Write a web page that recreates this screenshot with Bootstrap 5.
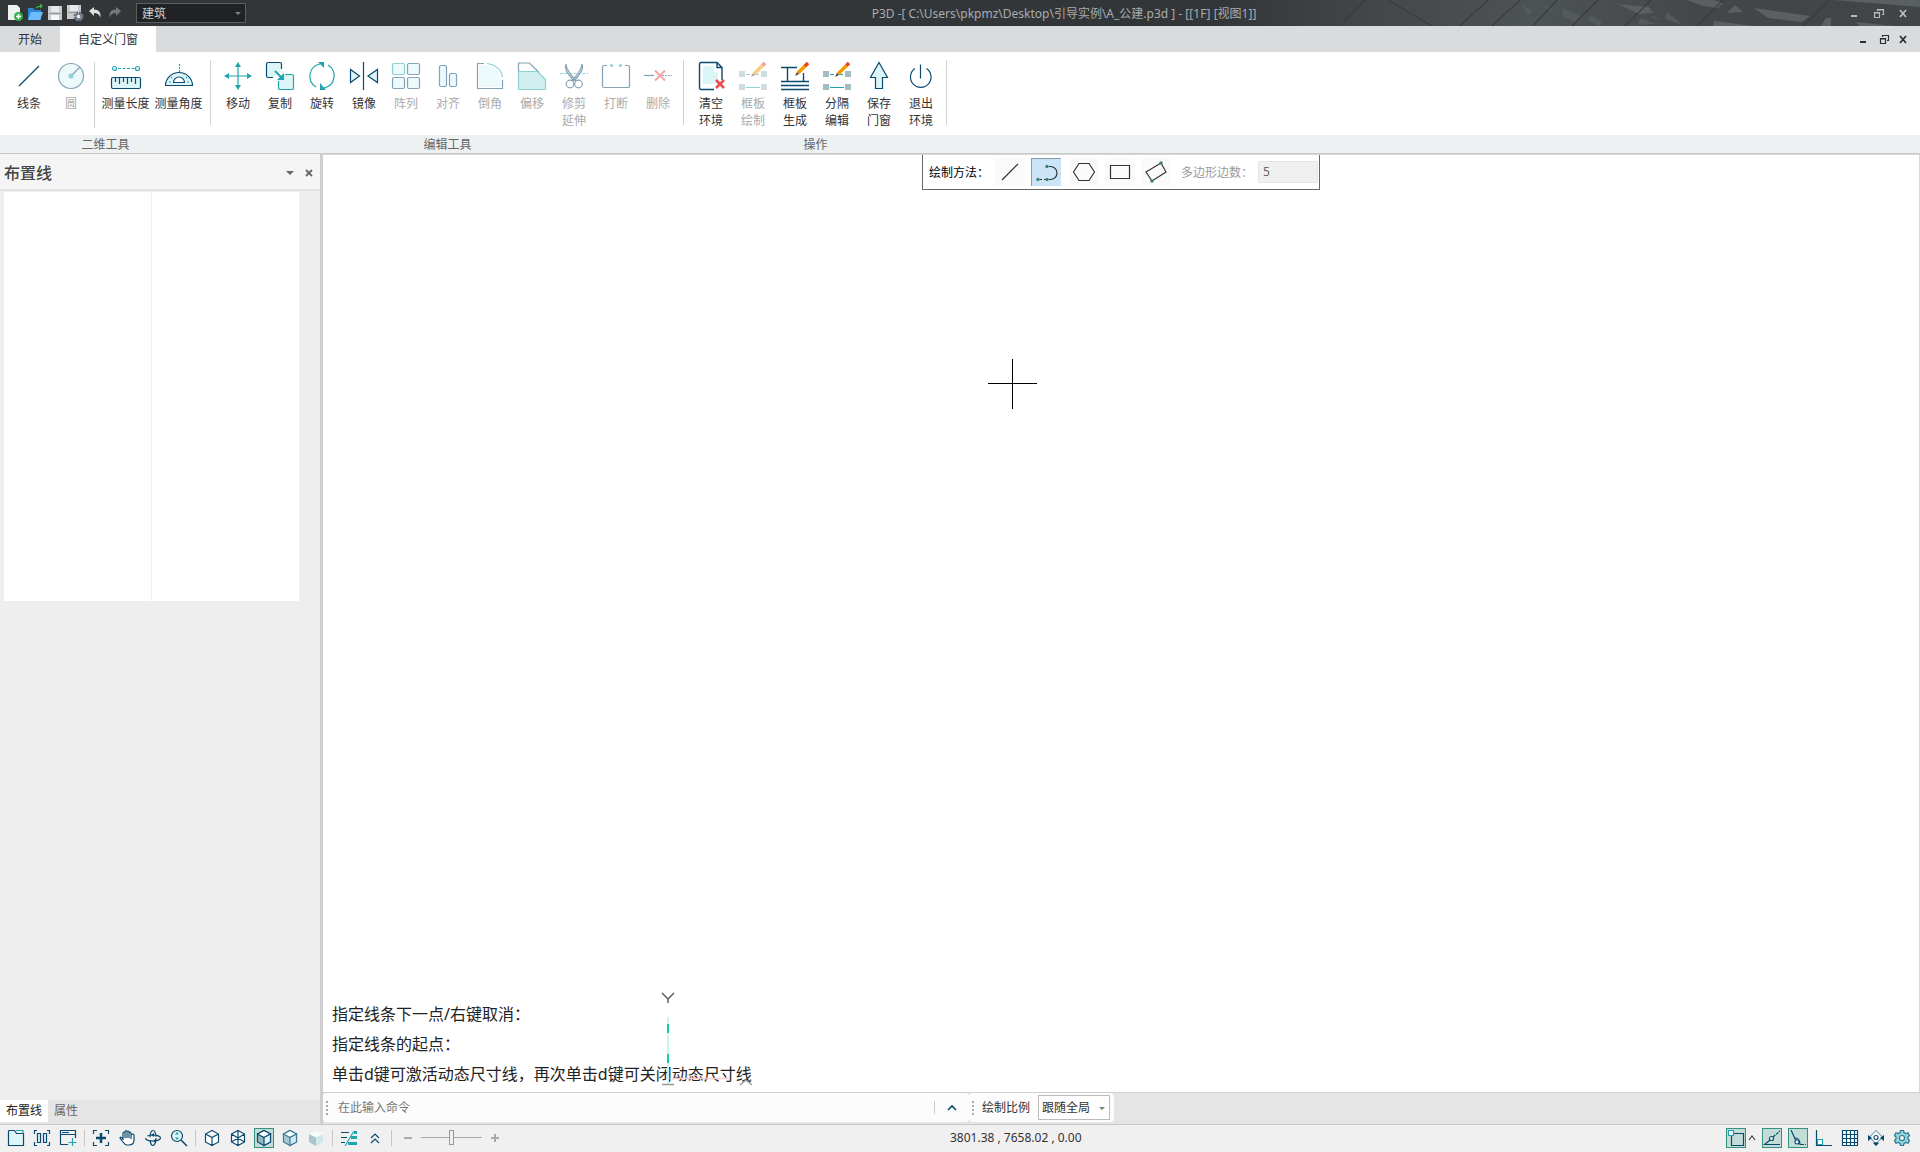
<!DOCTYPE html>
<html lang="zh-CN">
<head>
<meta charset="utf-8">
<meta name="viewport" content="width=device-width, initial-scale=1">
<title>P3D</title>
<link href="https://cdn.jsdelivr.net/npm/bootstrap@5.3.0/dist/css/bootstrap.min.css" rel="stylesheet">
<style>
:root{--navy:#0b4a6f;--teal:#1fa6ad;--pale:#dcf6f8}
body{font:12px/17px "Noto Sans","Noto Sans CJK SC",sans-serif;color:#333;background:#fff;overflow-x:hidden}
button,input,select{font:inherit;color:inherit}
svg{display:block;flex:none;fill:none;stroke:var(--navy);stroke-width:1.2}
.tool{border:0;background:none;padding:0}
.titlebar{height:26px;background:#323639;color:#a9abac}
.titlebar .art{position:absolute;right:0;top:0;z-index:0;stroke:none}
.titlebar>:not(.art){position:relative;z-index:1}
.qat{padding:0 3px 0 5px}
.qat .tool{width:20px;display:flex;justify-content:center}
.pick{appearance:none;border:1px solid #5c5e60;background:#212224;color:#ccc;width:110px;height:20px;padding:0 5px;line-height:17px;border-radius:0}
.pickwrap{position:relative;display:flex}
.pickwrap::after{content:"";position:absolute;right:5px;top:50%;margin-top:-1px;border:3px solid transparent;border-top-color:#808080;border-bottom:0;pointer-events:none}
.caption{padding-left:42px}
.winctl{width:80px;gap:10px;padding-left:4px}
.winctl .tool{width:16px}
.winctl svg{stroke:#b9bbbc}
.tabrow{height:26px;background:#dadbdd}
.tabrow a{color:#333;text-decoration:none;height:26px;line-height:28px;text-align:center;width:60px}
.tabrow a.on{background:#fff;width:96px}
.mdictl{gap:4px;padding-right:9px}
.mdictl .tool{width:16px}
.mdictl svg{stroke:#2c2f31}
.grp{display:flex;flex-direction:column}
.grp .tools{height:83px;padding:8px 5px 8px 6px;display:flex;position:relative}
.grp .tools::after{content:"";position:absolute;right:0;top:8px;height:65px;width:1px;background:#d2d2d2}
.grp .first{padding-left:8px;padding-right:6px}
.grp .tools i{width:1px;height:66px;margin:2px 4px 0 2px;background:#cfcfcf}
.grp h2{font-size:12px;line-height:20px;height:18px;margin:0;text-align:center;color:#666;font-weight:400}
.ribbon{background:linear-gradient(#fff 83px,#edf1f2 83px);border-bottom:1px solid #c8c8c8}
.cmd{width:42px;display:flex;flex-direction:column;align-items:center}
.cmd.wide{width:53px}
.cmd svg{width:32px;height:32px;margin-bottom:3px}
.cmd:disabled{color:#aaa}
.cmd:disabled svg{opacity:.5}
.side{width:323px;background:#eee;border-right:3px solid #cfcfcf}
.side header{height:37px;background:#f5f5f5;border-bottom:2px solid #e4e4e4;padding:2px 4px 0}
.side h1{font-size:16px;line-height:24px;margin:0;color:#444}
.side table{width:295px;height:409px;margin:1px 0 0 4px;background:#fff;table-layout:fixed}
.side td+td{border-left:1px solid #eee}
.dock{height:24px;background:#e5e5e5}
.dock a{color:#666;text-decoration:none;padding:0 6px;height:22px;line-height:22px}
.dock a.on{background:#fff;color:#222}
.canvas{background:#fff;border:1px solid #d8d8d8;border-width:1px 1px 0 0}
.method{border:1px solid #666;border-top:0;height:35px;width:398px;padding:0 1px 0 6px;color:#000}
.method .tool{width:30px;height:28px;background:#fafafa;margin-right:6px;display:flex;align-items:center;justify-content:center}
.method .tool.on{background:#cce4f7;border:1px solid #8e9aa3;border-width:1px 0 0 1px;margin-right:8px}
.method .pre{width:66px}
.method svg{stroke:#333}
.sidelabel{color:#999}
.sides{width:60px;height:22px;border:1px solid #e3e3e3;background:#f0f0f0;padding:0 4px 2px;color:#666;border-radius:2px}
.log{font-size:16px;line-height:30px;padding:0 0 3px 9px;color:#222}
.log p{margin:0}
.cross{position:absolute;left:665px;top:204px;stroke:#000;stroke-width:1}
.ucs{position:absolute;left:332px;bottom:1px;stroke-width:1.4}
.cmdbar{height:32px;border-top:1px solid #d0d0d0;background:#e5e5e5;padding-bottom:2px}
.pane{background:#fcfcfc;border-radius:4px;padding-left:3px}
.grip{width:2px;height:14px;background:repeating-linear-gradient(#aaa 0 2px,transparent 2px 4px)}
.cmdin{border:0;background:none;width:606px;padding:0 0 0 10px;outline:0}
.cmdin::placeholder{color:#777;opacity:1}
.expand{width:34px;display:flex;justify-content:center}
.scale .pick{background:#fff;border-color:#bbb;color:#333;width:72px;height:25px;padding:0 3px;line-height:22px}
.status{height:28px;background:#f0f0f0;border-top:1px solid #c8c8c8;padding:0 5px 2px 3px}
.status .tool{width:26px;height:25px;display:flex;align-items:center;justify-content:center}
.status .tool.on{width:20px;height:20px;margin:0 3px;background:#c2ddd7;border:1px solid #35917d}
.status i{width:1px;height:16px;margin:0 3px;background:#c6c6c6}
.zoom{appearance:none;width:61px;height:16px;margin:0 3px;background:linear-gradient(#a9a9a9,#a9a9a9) center/100% 1px no-repeat}
.zoom::-webkit-slider-thumb{appearance:none;width:5px;height:15px;background:#f0f0f0;border:1px solid #999}
.status .sm{width:20px}
.zoomset{margin-left:3px}
.status .narrow{width:13px}
.coords{left:950px}
.shaded{stroke:#41799a}
</style>
<script src="https://cdn.jsdelivr.net/npm/bootstrap@5.3.0/dist/js/bootstrap.bundle.min.js"></script>
</head>
<body class="d-flex flex-column min-vh-100">

<div class="titlebar d-flex align-items-center position-relative">
  <svg class="art" width="700" height="26" viewBox="0 0 700 26" aria-hidden="true">
    <defs><linearGradient id="sky"><stop offset="0" stop-color="#323639"/><stop offset=".25" stop-color="#45494c"/><stop offset=".45" stop-color="#4d5255"/><stop offset=".7" stop-color="#43474a"/><stop offset="1" stop-color="#404447"/></linearGradient></defs>
    <rect width="700" height="26" fill="url(#sky)"/>
    <path fill="#5a5f62" d="M467 0h27l9 3-5 5-15-2zM534 8l56 8-8 6-34-4zM507 13l8-8 8 7zM613 0h87v7zM494 21l39 5h-40zM601 26l5-8h5v8zM635 22l40 4h-35zM397 4l32 3 4 6-14 1z"/>
    <path fill="#54595c" d="M370 15l12 6-3 5-10-5zM447 12l16 13-18-6zM316 1l18 8-3 3zM430 15l12 5-10-2zM343 8l18 8-5 6-14-6zM300 4l13 6-5 6zM420 18l16 6-18 1z"/>
    <path stroke="#383c3f" stroke-width="1.200" d="M145 0l-21 22M168 0l44 26M268 0l-28 26M300 0l-28 26M337 0l-24 26M378 0l-26 26M431 0l-26 26M503 0l-26 26M610 0l-27 26"/>
  </svg>
  <div class="qat d-flex align-items-center">
    <button class="tool" aria-label="新建"><svg width="18" height="18" viewBox="0 0 18 18"><path d="M2 1h9l3 3v12H2z" fill="#eef0f1" stroke="none"/><circle cx="12.500" cy="12.500" r="4.500" fill="#35b04b" stroke="none"/><path d="M12.500 10v5M10 12.500h5" stroke="#fff" stroke-width="1.500"/></svg></button>
    <button class="tool" aria-label="打开"><svg width="18" height="18" viewBox="0 0 18 18"><path d="M2 4h5l2 2h6v10H2z" fill="#2f86d6" stroke="none"/><path d="M5 8h12l-3 8H2z" fill="#6cbcff" stroke="none"/><path d="M10 4c2-2 3-2 6-2M14 0l2 2-2 2" stroke="#43b94d"/></svg></button>
    <button class="tool" aria-label="保存"><svg width="18" height="18" viewBox="0 0 18 18"><path d="M2 2h14v14H2z" fill="#c9cbcd" stroke="none"/><path d="M5 2h8v6H5z" fill="#e6e9f0" stroke="none"/><path d="M5 11h8v5H5z" fill="#f7f7f7" stroke="none"/><path d="M3 9.500h12" stroke="#999"/></svg></button>
    <button class="tool" aria-label="另存为"><svg width="18" height="18" viewBox="0 0 18 18"><path d="M1 1h14v14H1z" fill="#c9cbcd" stroke="none"/><path d="M4 1h8v6H4z" fill="#e6e9f0" stroke="none"/><path d="M2 8.500h10" stroke="#999"/><circle cx="12.500" cy="12.500" r="3.800" stroke="#64727f" stroke-width="2.500" stroke-dasharray="2 1" fill="#dfe6ec"/><circle cx="12.500" cy="12.500" r="2.600" stroke="#64727f"/></svg></button>
    <button class="tool" aria-label="撤销"><svg width="14" height="14" viewBox="0 0 14 14"><path d="M1 5l5-4v2.500c5 0 7 3 6.500 8C11 8 9 7 6 7v3z" fill="#dedfe0" stroke="none"/></svg></button>
    <button class="tool" aria-label="重做" disabled><svg width="14" height="14" viewBox="0 0 14 14"><path d="M13 5L8 1v2.500c-5 0-7 3-6.500 8C3 8 5 7 8 7v3z" fill="#75797c" stroke="none"/></svg></button>
  </div>
  <div class="pickwrap ms-2"><select class="pick" aria-label="专业"><option>建筑</option></select></div>
  <div class="caption flex-fill text-center text-truncate">P3D -[ C:\Users\pkpmz\Desktop\引导实例\A_公建.p3d ] - [[1F] [视图1]]</div>
  <div class="winctl d-flex align-items-center">
    <button class="tool" aria-label="最小化"><svg width="16" height="16"><path d="M7 11h6" stroke-width="2"/></svg></button>
    <button class="tool" aria-label="还原"><svg width="16" height="16"><path d="M7.500 6V4.500h6v5H12M4.500 7.500h5v5h-5zM7 5h7M4 8h6"/></svg></button>
    <button class="tool" aria-label="关闭"><svg width="16" height="16"><path d="M4 5l6 7M10 5l-6 7" stroke-width="1.800"/></svg></button>
  </div>
</div>

<nav class="tabrow d-flex align-items-center">
  <a href="#">开始</a><a href="#" class="on">自定义门窗</a>
  <div class="mdictl d-flex ms-auto">
    <button class="tool" aria-label="最小化视图"><svg width="16" height="16"><path d="M5 11h6" stroke-width="2"/></svg></button>
    <button class="tool" aria-label="还原视图"><svg width="16" height="16"><path d="M7.500 6V4.500h6v5H12M5.500 7.500h5v5h-5zM7 4.500h7M5 8h6"/></svg></button>
    <button class="tool" aria-label="关闭视图"><svg width="16" height="16"><path d="M5 5l6 7M11 5l-6 7" stroke-width="1.800"/></svg></button>
  </div>
</nav>

<div class="ribbon d-flex">
  <section class="grp"><div class="tools first">
    <button class="cmd tool"><svg viewBox="0 0 32 32"><path d="M6 26L26 6"/></svg>线条</button>
    <button class="cmd tool" disabled><svg viewBox="0 0 32 32"><circle cx="16" cy="16" r="12.500" fill="#dcf6f8"/><path d="M16 16l9-9"/><circle cx="16" cy="16" r="2" fill="#1fa6ad" stroke="#1fa6ad"/></svg>圆</button>
    <i></i>
    <button class="cmd wide tool"><svg viewBox="0 0 32 32"><g stroke="#1fa6ad"><circle cx="4.500" cy="8.500" r="2"/><circle cx="27.500" cy="8.500" r="2"/><path d="M8 8.500h17" stroke-dasharray="3 1.500"/></g><rect x="1.500" y="17.500" width="29" height="11" rx="1.500" fill="#dcf6f8"/><path d="M5.500 18v4M9.500 18v6M13.500 18v4M17.500 18v6M21.500 18v4M25.500 18v6"/></svg>测量长度</button>
    <button class="cmd wide tool"><svg viewBox="0 0 32 32"><path d="M16.500 4v9" stroke="#1fa6ad" stroke-dasharray="2 1"/><path d="M2.500 25.500a13.500 13 0 0 1 27 0z" fill="#dcf6f8"/><path d="M10.500 22.500a5.500 5.500 0 0 1 11 0z" fill="#fff"/><path d="M6 22h2M24 22h2M8 17l1 1M24 17l-1 1" stroke="#1fa6ad"/></svg>测量角度</button>
  </div><h2>二维工具</h2></section>

  <section class="grp"><div class="tools">
    <button class="cmd tool"><svg viewBox="0 0 32 32"><path d="M16 5v22M5 16h22" stroke="#1fa6ad"/><path d="M16 2l3 5h-6zM16 30l3-5h-6zM2 16l5-3v6zM30 16l-5-3v6z" fill="#1fa6ad" stroke="none"/></svg>移动</button>
    <button class="cmd tool"><svg viewBox="0 0 32 32"><path d="M10 17.500H4a1.500 1.500 0 0 1-1.500-1.500V4A1.500 1.500 0 0 1 4 2.500h12A1.500 1.500 0 0 1 17.500 4v6L10 17z" fill="#dcf6f8" stroke="none"/><path d="M9 17.500H4a1.500 1.500 0 0 1-1.500-1.500V4A1.500 1.500 0 0 1 4 2.500h12A1.500 1.500 0 0 1 17.500 4v5"/><path d="M21 14.500h7a1.500 1.500 0 0 1 1.500 1.500v12a1.500 1.500 0 0 1-1.500 1.500H16a1.500 1.500 0 0 1-1.500-1.500v-7" fill="#dcf6f8" stroke="#1fa6ad"/><path d="M11 11l6 6" stroke="#1fa6ad" stroke-width="2"/><path d="M20 20v-7l-7 7z" fill="#1fa6ad" stroke="none"/></svg>复制</button>
    <button class="cmd tool"><svg viewBox="0 0 32 32"><path d="M10 27A12.500 12.500 0 0 1 14 4M22 5a12.500 12.500 0 0 1-4 23" stroke="#1fa6ad"/><path d="M12 2h6v6zM14 30v-7l6 7z" fill="#1fa6ad" stroke="none"/></svg>旋转</button>
    <button class="cmd tool"><svg viewBox="0 0 32 32"><path d="M15.500 2v28"/><path d="M2.500 9.500v13l9-6.500zM29.500 9.500v13L20 16z" fill="#dcf6f8"/></svg>镜像</button>
    <button class="cmd tool" disabled><svg viewBox="0 0 32 32"><g fill="#dcf6f8"><rect x="2.500" y="3.500" width="12" height="11" rx="1.500" stroke="#1fa6ad"/><rect x="17.500" y="3.500" width="12" height="11" rx="1.500"/><rect x="2.500" y="17.500" width="12" height="11" rx="1.500"/><rect x="17.500" y="17.500" width="12" height="11" rx="1.500"/></g></svg>阵列</button>
    <button class="cmd tool" disabled><svg viewBox="0 0 32 32"><rect x="7.500" y="5.500" width="7" height="21" rx="1.500" fill="#dcf6f8"/><rect x="17.500" y="13.500" width="7" height="13" rx="1.500" fill="#dcf6f8"/></svg>对齐</button>
    <button class="cmd tool" disabled><svg viewBox="0 0 32 32"><path d="M5 5h6q15 2 16 17v5H5z" fill="#dcf6f8" stroke="none"/><path d="M10 3.500H3.500v25h25V20"/><path d="M13 3.500Q27 6 28.500 17" stroke="#1fa6ad"/></svg>倒角</button>
    <button class="cmd tool" disabled><svg viewBox="0 0 32 32"><path d="M2.500 12v-9h11l9 9z"/><path d="M2.500 11.500h19l8 8v10h-27z" fill="#a4e0de" stroke="#1fa6ad"/></svg>偏移</button>
    <button class="cmd tool" disabled><svg viewBox="0 0 32 32"><path d="M2 13.500h28" stroke="#1fa6ad" stroke-dasharray="3 1.500"/><path d="M8 4c0 6 6 12 10 17l-3-1C10 14 6 9 8 4zM24 4c0 6-6 12-10 17l3-1c5-6 9-11 7-16z" fill="#dcf6f8"/><circle cx="12" cy="24" r="3.800" fill="#fff"/><circle cx="20.500" cy="24" r="3.800" fill="#fff"/></svg>修剪<br>延伸</button>
    <button class="cmd tool" disabled><svg viewBox="0 0 32 32"><path d="M7 5.500H4A1.500 1.500 0 0 0 2.500 7v19a1.500 1.500 0 0 0 1.500 1.500h24a1.500 1.500 0 0 0 1.500-1.500V7a1.500 1.500 0 0 0-1.500-1.500h-3"/><g fill="#1fa6ad" stroke="none"><circle cx="11.500" cy="5.500" r="1.500"/><circle cx="20.500" cy="5.500" r="1.500"/></g></svg>打断</button>
    <button class="cmd tool" disabled><svg viewBox="0 0 32 32"><path d="M2 15.500h10"/><path d="M20 15.500h10" stroke-dasharray="2 1"/><path d="M13 10.500l10 10M23 10.500l-10 10" stroke="#ee5048" stroke-width="2"/></svg>删除</button>
  </div><h2>编辑工具</h2></section>

  <section class="grp"><div class="tools">
    <button class="cmd tool"><svg viewBox="0 0 32 32"><path d="M8 6h11v6h4v12H8z" fill="#dcf6f8" stroke="none"/><path d="M19 29.500H6A1.500 1.500 0 0 1 4.500 28V4A1.500 1.500 0 0 1 6 2.500h16l5 5V20M22 2.500v5h5" stroke-width="1.400"/><path d="M21 20l8 8M29 20l-8 8" stroke="#e94f52" stroke-width="2.500"/></svg>清空<br>环境</button>
    <button class="cmd tool" disabled><svg viewBox="0 0 32 32"><path fill="#a3bcc1" stroke="none" d="M2 11h6v6H2zM24 11h6v6h-6zM2 24h6v6H2zM24 24h6v6h-6z"/><path d="M9 14.500h4M18 14.500h4M9 27.500h14" stroke="#1fa6ad"/><path d="M17 14l9-9" stroke="#f59a00" stroke-width="3.500"/><path d="M25.500 5.500l2.500-2.500" stroke="#e8422c" stroke-width="3.500"/><path d="M14 17l2-4 2 2z" fill="#4b4035" stroke="none"/></svg>框板<br>绘制</button>
    <button class="cmd tool"><svg viewBox="0 0 32 32"><path d="M2 7.500h16M8.500 8v13M24.500 13v8M2 21.500h28M2 25.500h28M2 29.500h28" stroke-width="1.400"/><path d="M19 13l8-8" stroke="#f59a00" stroke-width="3.500"/><path d="M26 6l3-3" stroke="#e8422c" stroke-width="3.500"/><path d="M16 16l2-4 2 2z" fill="#4b4035" stroke="none"/></svg>框板<br>生成</button>
    <button class="cmd tool"><svg viewBox="0 0 32 32"><path fill="#a3bcc1" stroke="none" d="M2 11h6v6H2zM24 11h6v6h-6zM2 24h6v6H2zM24 24h6v6h-6z"/><path d="M9 14.500h4M18 14.500h4M9 27.500h14" stroke="#1fa6ad"/><path d="M17 14l9-9" stroke="#f59a00" stroke-width="3.500"/><path d="M25.500 5.500l2.500-2.500" stroke="#e8422c" stroke-width="3.500"/><path d="M14 17l2-4 2 2z" fill="#4b4035" stroke="none"/></svg>分隔<br>编辑</button>
    <button class="cmd tool"><svg viewBox="0 0 32 32"><path d="M16 2.500l8.500 15h-5v11h-7v-11h-5z" fill="#dcf6f8"/></svg>保存<br>门窗</button>
    <button class="cmd tool"><svg viewBox="0 0 32 32"><path d="M15.500 4.500v14M10 8.500a10.300 10.300 0 1 0 11.500 0"/></svg>退出<br>环境</button>
  </div><h2>操作</h2></section>
</div>

<main class="d-flex flex-fill">
  <aside class="side d-flex flex-column flex-shrink-0">
    <header class="d-flex align-items-center"><h1 class="flex-fill">布置线</h1>
      <button class="tool me-1" aria-label="面板菜单"><svg width="12" height="8"><path d="M2 2h8L6 6z" fill="#666" stroke="none"/></svg></button>
      <button class="tool" aria-label="关闭面板"><svg width="16" height="16"><path d="M6 5l6 6M12 5l-6 6" stroke="#666" stroke-width="1.800"/></svg></button>
    </header>
    <table aria-label="布置线属性"><tbody><tr><td></td><td></td></tr></tbody></table>
    <nav class="dock d-flex mt-auto"><a class="on" href="#">布置线</a><a href="#">属性</a></nav>
  </aside>

  <div class="d-flex flex-column flex-fill">
    <div class="canvas position-relative d-flex flex-column justify-content-between flex-fill">
      <div class="method d-flex align-items-center align-self-center">
        <span class="pre">绘制方法：</span>
        <button class="tool" aria-label="直线"><svg width="24" height="24"><path d="M4 20L20 4"/></svg></button>
        <button class="tool on" aria-label="直线圆弧"><svg width="24" height="24"><path d="M5 18.500h6M14 5.500h1.500a6.500 6.500 0 0 1 0 13H14"/><path d="M7 18.500h2" stroke="#cce4f7"/><g fill="#3e8573" stroke="none"><circle cx="3" cy="18.500" r="1.700"/><circle cx="12" cy="18.500" r="1.700"/><circle cx="12" cy="5.500" r="1.700"/></g></svg></button>
        <button class="tool" aria-label="多边形"><svg width="24" height="24"><path d="M1.500 12L7 3.500h10l5.500 8.500L17 20.500H7z"/></svg></button>
        <button class="tool" aria-label="矩形"><svg width="24" height="24"><path d="M2.500 5.500h19v13h-19z"/></svg></button>
        <button class="tool" aria-label="斜矩形"><svg width="24" height="24"><path d="M2 12L17 3l5 9L8 21z"/><circle cx="17" cy="3" r="1.800" fill="#3e8573" stroke="none"/><circle cx="8" cy="21" r="1.800" fill="#3e8573" stroke="none"/></svg></button>
        <label class="sidelabel ms-1 flex-fill" for="sides">多边形边数：</label>
        <input class="sides" id="sides" value="5" disabled>
      </div>
      <svg class="cross" width="49" height="50" aria-hidden="true"><path d="M24.500 0v50M0 24.500h49"/></svg>
      <svg class="ucs" width="110" height="104" aria-hidden="true"><path d="M7 6l6 6 6-6M13 12v4" stroke="#555"/><path d="M13 30v68" stroke="#c8f5ec" stroke-width="2"/><path d="M13 37v9M13 67v9" stroke="#0fce9f" stroke-width="2"/><path d="M15 91.500h59" stroke="#ffc9c9"/><path d="M7 97.500h12M85 98l6-5 6 5" stroke="#999"/></svg>
      <div class="log"><p>指定线条下一点/右键取消：</p><p>指定线条的起点：</p><p>单击d键可激活动态尺寸线，再次单击d键可关闭动态尺寸线</p></div>
    </div>
    <div class="cmdbar d-flex">
      <div class="pane d-flex align-items-center"><span class="grip"></span>
        <input class="cmdin" aria-label="命令" placeholder="在此输入命令">
        <span class="vr my-2"></span>
        <button class="tool expand" aria-label="展开"><svg width="16" height="10"><path d="M4 7l4-4 4 4" stroke-width="1.600"/></svg></button>
      </div>
      <div class="pane scale d-flex align-items-center pe-1"><span class="grip"></span>
        <label class="ms-2 me-2" for="ratio">绘制比例</label>
        <div class="pickwrap"><select id="ratio" class="pick"><option>跟随全局</option></select></div>
      </div>
    </div>
  </div>
</main>

<footer class="status d-flex align-items-center position-relative">
  <button class="tool" aria-label="项目"><svg width="18" height="18"><path d="M1.500 16.500V2.500a1 1 0 0 1 1-1h5l2 3h7v12z" fill="#dcf6f8"/><path d="M9 1.500h7v3" stroke="#1fa6ad"/></svg></button>
  <button class="tool" aria-label="双视图"><svg width="18" height="18"><path d="M4 1.500H1.500V5M1.500 13v3.500H4M14 1.500h2.500V5M16.500 13v3.500H14"/><path d="M4.500 4.500h3v9h-3zM10.500 4.500h3v9h-3z" fill="#dcf6f8"/></svg></button>
  <button class="tool" aria-label="新窗口"><svg width="18" height="18"><path d="M9 15.500H1.500v-14h15V9M1.500 5.500h15M3 3.500h7"/><path d="M13.500 9v8M9.500 13.500h8" stroke="#1fa6ad"/></svg></button><i></i>
  <button class="tool" aria-label="全图"><svg width="18" height="18"><path d="M5 1.500H1.500V5M1.500 13v3.500H5M13 1.500h3.500V5M16.500 13v3.500H13"/><path d="M9 4v10M4 9h10" stroke-width="2.500"/></svg></button>
  <button class="tool" aria-label="平移"><svg width="18" height="18"><path d="M5 11V4q1-2 2 0V3q1-3 2 0q1-2 2 0v1q2-2 2 1v1q2-2 3 0v5q0 5-5 5H9q-2 0-4-3l-3-4q0-2 3 1M7 4v5M9 3v6M11 4v5M13 5v5" fill="#fff"/></svg></button>
  <button class="tool" aria-label="旋转视图"><svg width="18" height="18"><ellipse cx="9" cy="9" rx="7.500" ry="3" stroke-dasharray="17 3"/><ellipse cx="9" cy="9" rx="3" ry="7.500" stroke-dasharray="15 3"/><path d="M7 6l3-2v4zM12 10l-3 2 3 2z" fill="#0b4a6f" stroke="none"/></svg></button>
  <button class="tool" aria-label="缩放"><svg width="18" height="18"><circle cx="7" cy="7" r="5.500" fill="#dcf6f8"/><path d="M11 11l6 6" stroke-width="1.600"/><path d="M7 3l2 2.500H5zM7 11l2-2.500H5z" fill="#1fa6ad" stroke="none"/></svg></button><i></i>
  <button class="tool" aria-label="线框"><svg width="18" height="18"><path d="M9 1.500l6.500 3.500v8L9 16.500 2.500 13V5zM2.500 5L9 8.500 15.500 5M9 8.500v8" fill="#fff"/></svg></button>
  <button class="tool" aria-label="透视线框"><svg width="18" height="18"><path d="M9 1.500l6.500 3.500v8L9 16.500 2.500 13V5zM2.500 5l13 8M15.500 5l-13 8M9 1.500v15" fill="#fff"/></svg></button>
  <button class="tool on" aria-label="消隐"><svg width="18" height="18"><path d="M9 1.500l6.500 3.500v8L9 16.500 2.500 13V5z" fill="#93b9bd"/><path d="M2.500 5L9 1.500 15.500 5 9 8.500z" fill="#fff"/><path d="M9 8.500v8L15.500 13V5z" fill="#dcf6f8"/></svg></button>
  <button class="tool" aria-label="着色"><svg class="shaded" width="18" height="18"><path d="M9 1.500l6.500 3.500v8L9 16.500 2.500 13V5z" fill="#a6c9cd"/><path d="M2.500 5L9 1.500 15.500 5 9 8.500z" fill="#f3ffff"/><path d="M9 8.500v8L15.500 13V5z" fill="#cdecee"/></svg></button>
  <button class="tool" aria-label="真实"><svg width="18" height="18"><g stroke="none"><path d="M9 8v9l-7-4V5z" fill="#a8c5cb"/><path d="M2 5l7-3 7 3-7 3.500z" fill="#f4fbfb"/><path d="M9 8.500V17l7-4V5z" fill="#cfe8eb"/></g></svg></button><i></i>
  <button class="tool" aria-label="线宽"><svg width="18" height="18"><path d="M1 3.500h8M1 8.500h6M1 13.500h4"/><path d="M5 17L14 2" stroke="#1fa6ad"/><path d="M14 3.500h3M11 8.500h6M8 14.500h9" stroke="#1fa6ad" stroke-width="3"/></svg></button>
  <button class="tool" aria-label="更多"><svg width="18" height="18"><path d="M5 9l4-4 4 4M5 14l4-4 4 4"/></svg></button><i></i>
  <div class="zoomset d-flex align-items-center">
    <button class="tool sm" aria-label="缩小"><svg width="12" height="12"><path d="M2 6h8" stroke="#a9a9a9" stroke-width="2"/></svg></button>
    <input class="zoom" type="range" aria-label="缩放比例">
    <button class="tool sm" aria-label="放大"><svg width="12" height="12"><path d="M2 6h8M6 2v8" stroke="#a9a9a9" stroke-width="2"/></svg></button>
  </div>
  <output class="coords position-absolute">3801.38 , 7658.02 , 0.00</output>
  <div class="ms-auto d-flex align-items-center">
    <button class="tool on me-0" aria-label="捕捉"><svg width="18" height="18"><path d="M6 4.500h10.500v12H4.500V7"/><path d="M1.500 1.500h5v5h-5z" fill="#fff" stroke="#1fa6ad"/></svg></button>
    <button class="tool narrow" aria-label="捕捉选项"><svg width="10" height="10"><path d="M1 7l3-4 3 4" stroke="#444"/></svg></button>
    <button class="tool on" aria-label="极轴"><svg width="18" height="18"><path d="M17 15.500H1.500L7 11"/><path d="M10 8l7-6" stroke-dasharray="3 1"/><circle cx="8.500" cy="9.500" r="2" fill="#fff"/></svg></button>
    <button class="tool on" aria-label="追踪"><svg width="18" height="18"><path d="M2 1l5 11"/><path d="M11 15.500h6" stroke-dasharray="4 1"/><path d="M6 9q5 0 5 7"/><circle cx="8" cy="13" r="2" fill="#fff"/></svg></button>
    <button class="tool" aria-label="正交"><svg width="18" height="18"><path d="M1.500 1v15.500H17"/><path d="M2.500 10.500h5v5h-5z" fill="#fff" stroke="#1fa6ad"/></svg></button>
    <button class="tool" aria-label="栅格"><svg width="18" height="18"><path d="M1.500 1.500h15v15h-15zM5.500 1v16M9.500 1v16M13.500 1v16M1 5.500h16M1 9.500h16M1 13.500h16" fill="#fff"/></svg></button>
    <button class="tool" aria-label="夹点"><svg width="18" height="18"><path d="M9 1.500L15.500 8 9 15 2.500 8z" stroke="#8bb0bd" fill="#fff"/><path d="M1 6v6l4-3zM17 6v6l-4-3zM9 17l3-3-3-1-3 1z" fill="#0b4a6f" stroke="none"/><circle cx="9" cy="8.500" r="2"/></svg></button>
    <button class="tool" aria-label="设置"><svg width="18" height="18"><path d="M7.500 1.500h3l.5 2 2 1 2-.7 1.500 2.600L15 8v2l1.500 1.600-1.500 2.600-2-.7-2 1-.5 2h-3l-.5-2-2-1-2 .7-1.500-2.600L3 10V8L1.500 6.400 3 3.800l2 .7 2-1z" fill="#8bd6da" stroke="#34738f"/><circle cx="9" cy="9" r="2.500" fill="#fff" stroke="#34738f"/></svg></button>
  </div>
</footer>
</body>
</html>
